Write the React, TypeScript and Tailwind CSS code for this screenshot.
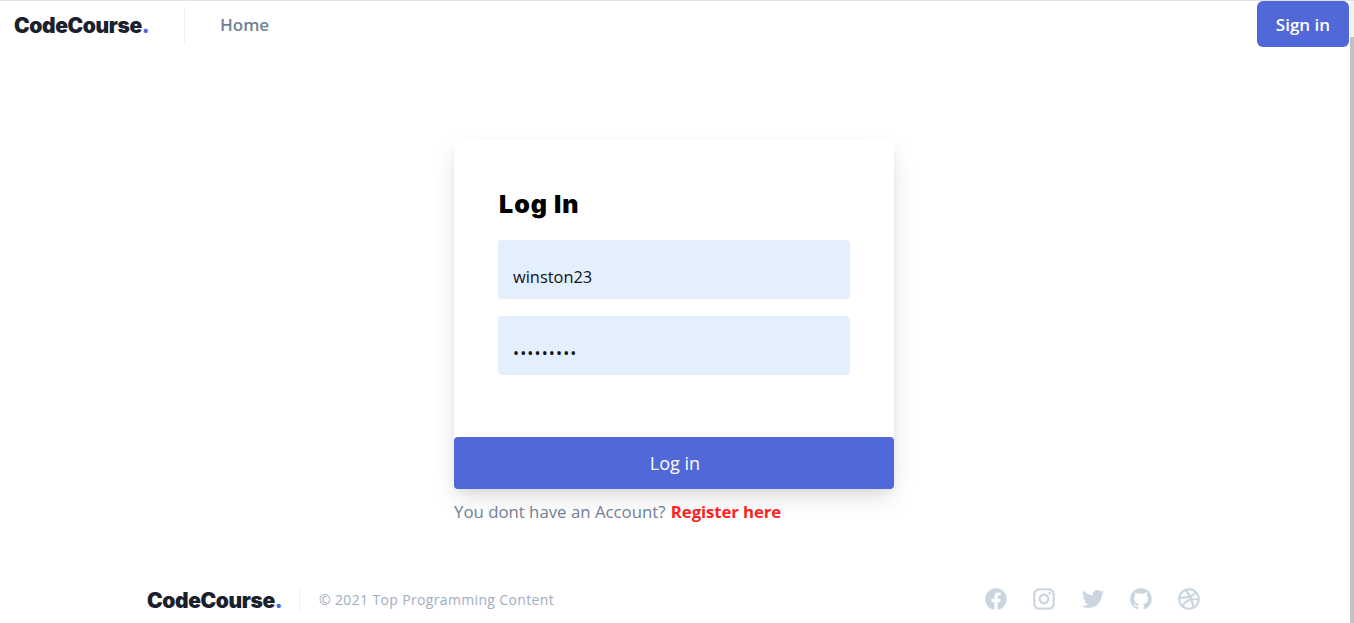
import { RiFacebookCircleFill, RiInstagramLine, RiTwitterFill, RiGithubFill, RiDribbbleLine } from 'react-icons/ri';

const font = "font-['Open_Sans','Noto_Sans',sans-serif]";

function Logo() {
  return (
    <span className="font-['Inter',sans-serif] text-[21px] font-black leading-none tracking-[-0.4px] text-[#1a202c]">
      CodeCourse<span className="text-[#5168d8]">.</span>
    </span>
  );
}

export default function App() {
  return (
    <div className={`${font} relative h-[623px] overflow-hidden bg-white flex flex-col`}>
      {/* nav */}
      <header className="h-[48px] shrink-0 border-t border-[#dfe1e5] flex items-start">
        <div className="mt-[6px] pl-[14px] w-[185px] h-[36px] border-r border-[#edf2f7] flex items-center">
          <Logo />
        </div>
        <a className="ml-[35px] mt-[12px] text-[17px] leading-[23px] font-semibold text-[#718096]">Home</a>
        <button className="ml-auto mr-[5px] w-[92px] h-[46px] pt-[1px] rounded-md bg-[#5168d8] text-white text-[17px] font-semibold">
          Sign in
        </button>
      </header>

      {/* login */}
      <main className="flex-1 flex flex-col items-center pt-[92px] pr-[6px]">
        <div className="w-[440px] rounded shadow-[0_10px_25px_-3px_rgba(0,0,0,0.14),0_4px_8px_-2px_rgba(0,0,0,0.06)]">
          <div className="h-[297px] pl-[44px] pt-[48px]">
            <h1 className="pl-[1px] font-['Inter',sans-serif] text-[25px] leading-[32px] font-black tracking-[1px] text-black">Log In</h1>
            <div className="mt-[20px] flex flex-col gap-[17px]">
              <div className="h-[59px] w-[352px] rounded bg-[#e3effd] pl-[15px] pt-[26px] text-[16.4px] leading-[22px] text-[#111]">
                winston23
              </div>
              <div className="h-[59px] w-[352px] rounded bg-[#e3effd] pl-[15px] pt-[26px] text-[16px] leading-[22px] tracking-[1.15px] text-[#111]">
                •••••••••
              </div>
            </div>
          </div>
          <button className="block w-full h-[52px] pl-[2px] rounded bg-[#5168d8] text-white text-[18px]">Log in</button>
        </div>
        <p className="w-[440px] mt-[11px] text-[16.8px] leading-[24px] text-[#718096]">
          You dont have an Account? <a className="ml-[1px] font-bold tracking-[-0.1px] text-[#ff2222]">Register here</a>
        </p>
      </main>

      {/* footer */}
      <footer className="h-[48px] shrink-0 pl-[147px] pr-[152px] flex items-center">
        <div className="w-[153px] h-[24px] pt-[2px] border-r border-[#edf2f7] flex items-center">
          <Logo />
        </div>
        <span className="ml-[19px] text-[14px] tracking-[0.35px] text-[#a0aec0]">© 2021 Top Programming Content</span>
        <div className="ml-auto flex gap-[22.25px] text-[#cbd5e0]">
          <RiFacebookCircleFill size={26} />
          <RiInstagramLine size={26} />
          <RiTwitterFill size={26} />
          <RiGithubFill size={26} />
          <RiDribbbleLine size={26} />
        </div>
      </footer>

      {/* page scrollbar */}
      <div className="absolute right-0 top-[1px] bottom-0 w-[4px] bg-[#f1f1f1]">
        <div className="mt-[36px] h-full bg-[#c1c1c1]" />
      </div>
    </div>
  );
}
